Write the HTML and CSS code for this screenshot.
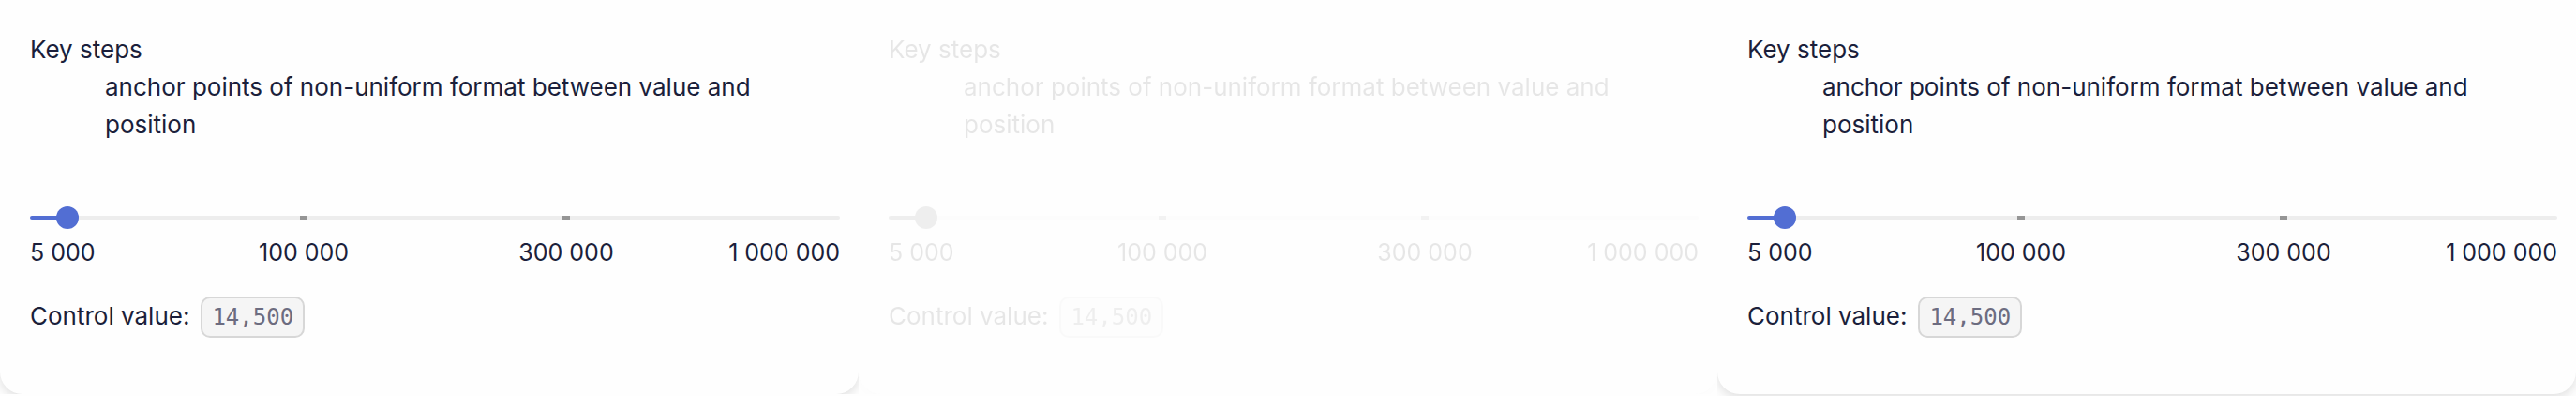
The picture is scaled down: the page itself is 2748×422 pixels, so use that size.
FILE: index.html
```
<!DOCTYPE html>
<html lang="en">
<head>
<meta charset="utf-8">
<title>Slider key steps</title>
<link rel="stylesheet" href="styles.css">
</head>
<body>
<main class="panels">
  <div class="panel">
    <section class="card">
      <dl class="info"><dt>Key steps</dt><dd>anchor points of non-uniform format between value and position</dd></dl>
      <div class="slider">
        <input class="range" type="range" min="0" max="300" value="10" aria-label="Key steps">
        <span class="ticks"><i class="tick"></i><i class="tick"></i></span>
      </div>
      <div class="labels"><span>5 000</span><span>100 000</span><span>300 000</span><span>1 000 000</span></div>
      <p class="value">Control value: <code class="code">14,500</code></p>
    </section>
  </div>
  <div class="panel">
    <section class="card card-faded">
      <dl class="info"><dt>Key steps</dt><dd>anchor points of non-uniform format between value and position</dd></dl>
      <div class="slider">
        <input class="range" type="range" min="0" max="300" value="10" aria-label="Key steps" disabled>
        <span class="ticks"><i class="tick"></i><i class="tick"></i></span>
      </div>
      <div class="labels"><span>5 000</span><span>100 000</span><span>300 000</span><span>1 000 000</span></div>
      <p class="value">Control value: <code class="code">14,500</code></p>
    </section>
  </div>
  <div class="panel panel-edge">
    <section class="card">
      <dl class="info"><dt>Key steps</dt><dd>anchor points of non-uniform format between value and position</dd></dl>
      <div class="slider">
        <input class="range" type="range" min="0" max="300" value="10" aria-label="Key steps">
        <span class="ticks"><i class="tick"></i><i class="tick"></i></span>
      </div>
      <div class="labels"><span>5 000</span><span>100 000</span><span>300 000</span><span>1 000 000</span></div>
      <p class="value">Control value: <code class="code">14,500</code></p>
    </section>
  </div>
</main>
</body>
</html>
```
FILE: styles.css
```
* { box-sizing: border-box; }
body {
  margin: 0;
  background: #fefefe;
  color: #1b1f3b;
  font: 26px/40px Inter, "Noto Sans", sans-serif;
}
.panels { display: grid; grid-template-columns: repeat(3, minmax(0, 1fr)); align-items: start; }
.panel { overflow: hidden; }
.panel-edge { padding-bottom: 2px; }
.card {
  padding: 33px 20px 60px 32px;
  border-radius: 0 0 24px 24px;
  background: #fefefe;
  box-shadow: 0 4px 12px rgba(0, 0, 0, 0.12);
}
.card-faded { opacity: 0.1; filter: grayscale(1); }
.info { margin: 0 0 67px; }
.info dd { margin: 0 0 0 80px; }
.slider { position: relative; display: flex; height: 24px; }
.range {
  appearance: none;
  width: 100%;
  height: 24px;
  margin: 0;
  background: none;
}
.range::-webkit-slider-runnable-track {
  height: 4px;
  border-radius: 2px;
  background: linear-gradient(#526ed3, #526ed3) left / 40px 100% no-repeat #ededed;
}
.range::-webkit-slider-thumb {
  appearance: none;
  width: 24px;
  height: 24px;
  margin-top: -10px;
  border-radius: 50%;
  background: #526ed3;
}
.ticks {
  position: absolute;
  inset: 10px 0;
  display: flex;
  justify-content: space-evenly;
  padding: 0 16px;
  pointer-events: none;
}
.tick { width: 8px; height: 4px; background: #959595; }
.labels {
  display: grid;
  grid-template-columns: minmax(0, 1fr) minmax(0, 2fr) minmax(0, 2fr) minmax(0, 1fr);
  margin: 5px 12px 0;
  font-size: 25px;
  text-align: center;
  white-space: nowrap;
}
.labels span:first-child { margin-left: -12px; text-align: left; }
.labels span:last-child { margin-right: -12px; text-align: right; }
.value { margin: 27px 0 0; display: flex; align-items: baseline; gap: 12px; }
.code {
  padding: 0 10px;
  border: 2px solid #d7d7d7;
  border-radius: 10px;
  background: #f5f5f5;
  color: #6c6c80;
  font: 24px/40px "DejaVu Sans Mono", monospace;
}
```
